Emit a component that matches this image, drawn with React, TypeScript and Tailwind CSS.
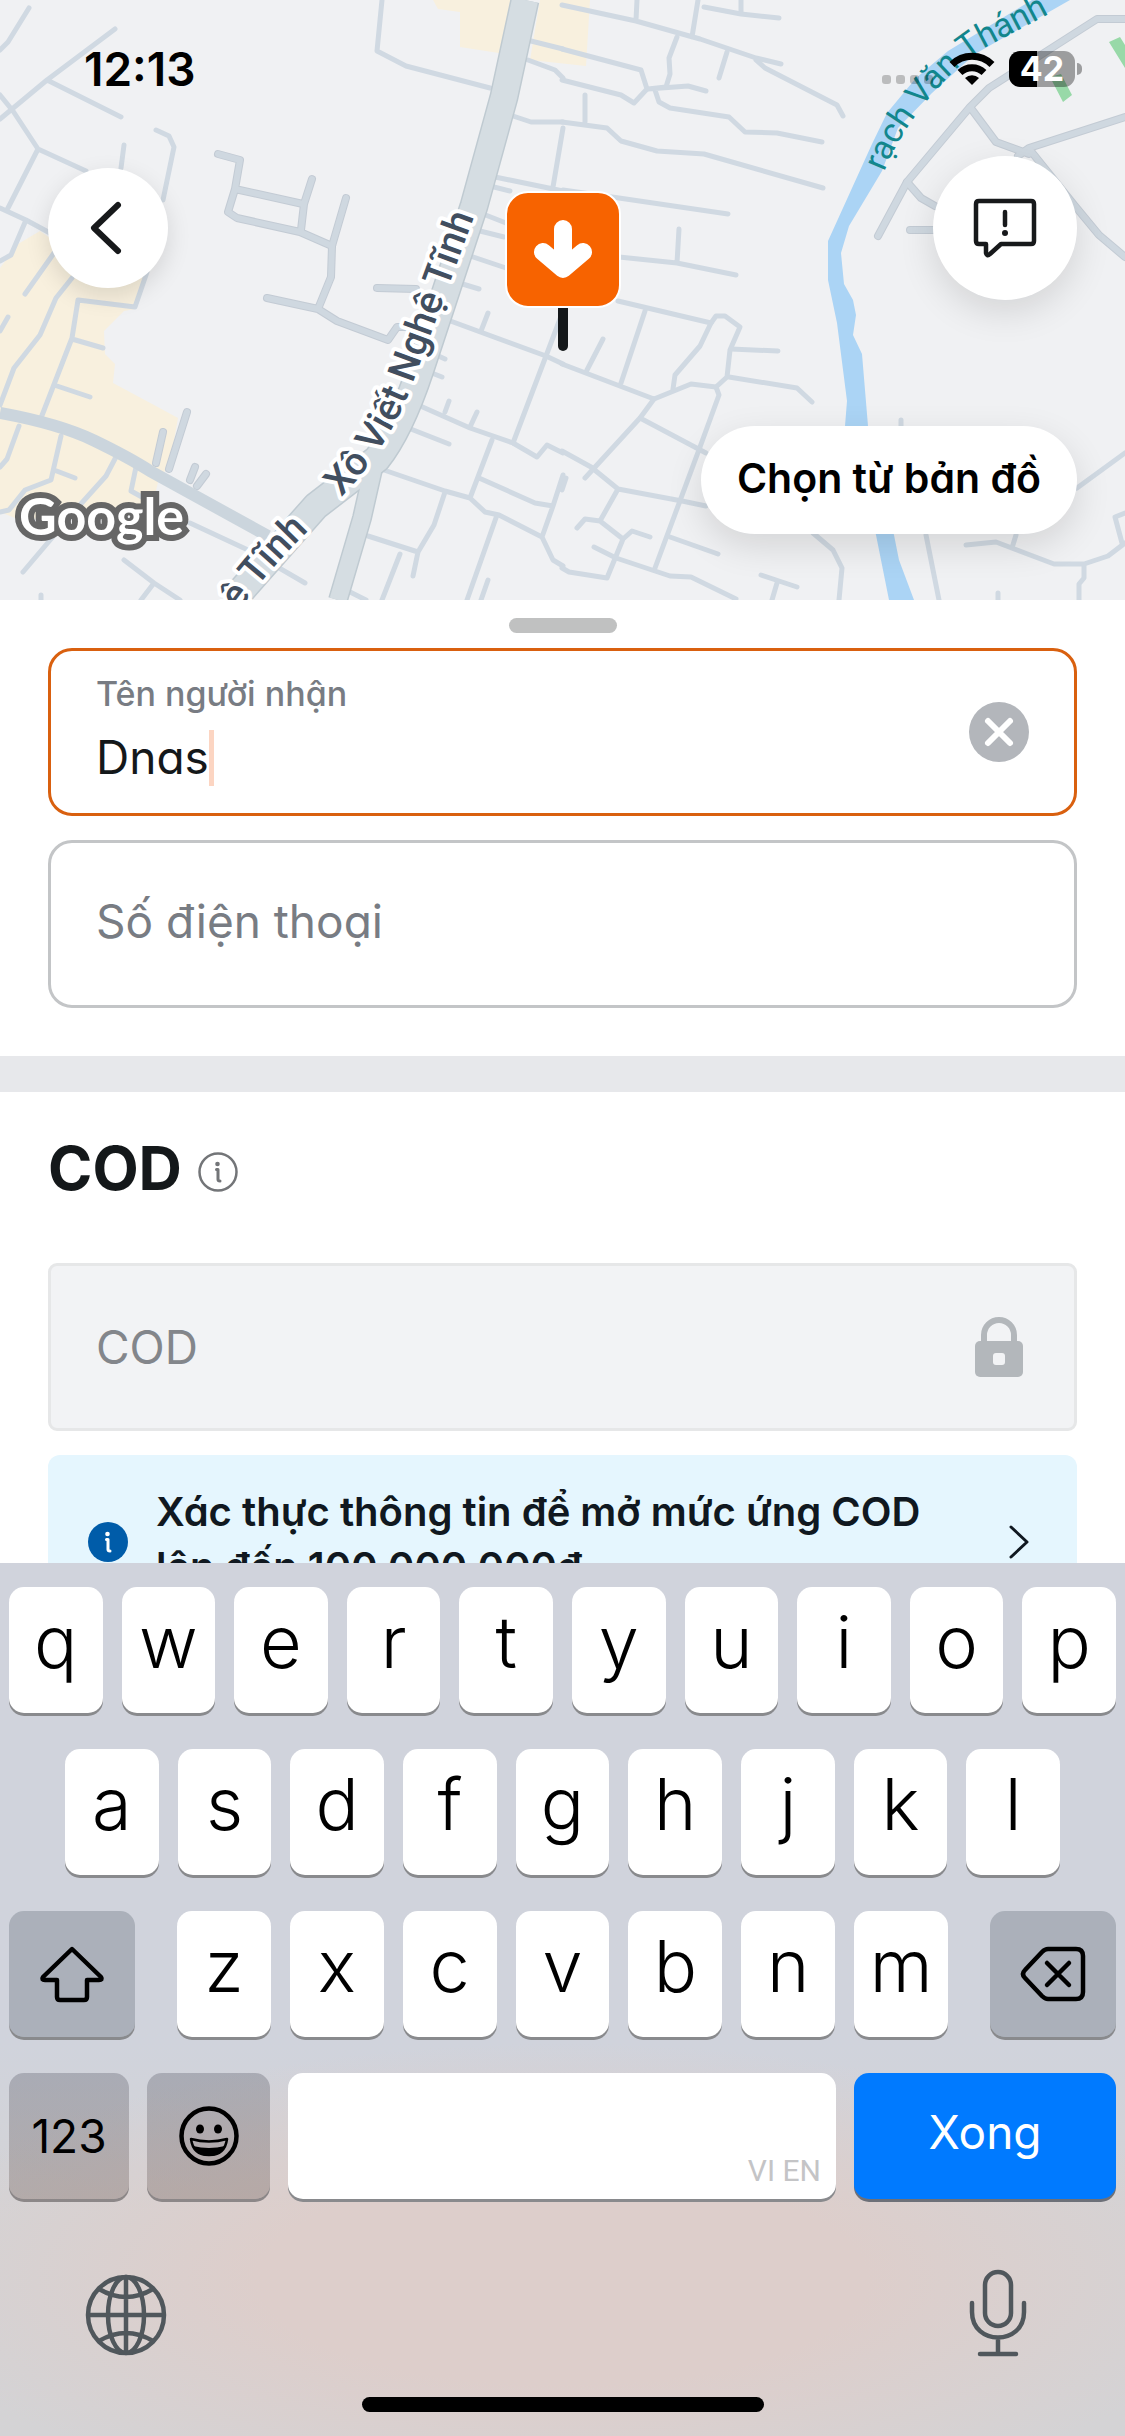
import { useState } from "react";

const ROW_ONE = ["q", "w", "e", "r", "t", "y", "u", "i", "o", "p"];
const ROW_TWO = ["a", "s", "d", "f", "g", "h", "j", "k", "l"];
const ROW_THREE = ["z", "x", "c", "v", "b", "n", "m"];

const LANES = [
  "M0 50L8 42L29 8M0 119L47 80L115 29M47 80L121 117M0 95L13 111L38 149L86 171M38 149L8 208M0 208L26 220L50 233M26 220L11 255L0 261",
  "M124 145L121 168M156 130L169 136L174 147L163 200M147 272L135 307L78 300L72 338L41 418M72 339L103 348M54 385L90 397",
  "M54 253L25 294M72 278L56 298L40 335L14 368L0 405M8 317L0 331M19 426L7 459L0 467M61 436L51 480L25 490L9 510L0 512M54 470L75 478",
  "M117 455L106 476L79 506L23 572M136 467L131 491L151 502M190 523L248 550L305 583M124 560L154 583L180 600M154 583L141 600M41 595V600",
  "M382 0L377 51L406 66L490 88M531 41L563 49M528 60L555 70L563 78M513 116L531 122H563M563 128L553 187M495 177L563 191M494 187L510 191",
  "M483 214L506 223M476 230L504 237M467 255L506 268M456 282L479 289M445 319L546 356L563 364M488 313L481 331M563 311L546 356L513 443",
  "M434 354L445 359M424 370L442 377M409 401L470 428L513 443L537 457L547 445L563 453M449 401L445 412M477 412L470 427M398 424L449 444",
  "M381 469L445 491L470 498L485 512L499 515L542 537L553 560L563 566M492 440L470 498M479 478L535 503L553 506L563 475M553 506L542 537",
  "M445 492L434 525L418 552L413 576M368 536L418 552M400 554L382 600M348 591L366 600M497 515L467 600M488 580L481 600",
  "M562 5L636 21L700 39L756 58L781 64M637 0L636 20M698 0L692 37M704 7L741 14L779 18M741 0V14M562 49L641 70L647 89L634 103L621 95L562 80",
  "M677 37L669 58L670 74L666 87L648 89L688 86L706 91M727 52L719 78M756 60L765 68L837 105L843 116M655 90L659 102L670 108L729 117L745 132L777 133L822 142",
  "M585 95V122M562 122L607 128L621 141L657 151L704 154L823 188M563 190L619 198L728 214M679 229L677 263M619 257L677 263L736 275",
  "M618 301L711 323L716 316L725 316L740 327L730 350L727 377L716 387L691 384L654 399L562 364M603 339L587 370M645 311L621 383",
  "M711 323L700 346L675 375L673 389M731 349L778 351M729 377L797 388L812 402M716 387L719 395L700 447L655 568M654 399L640 418L585 478M640 418L706 453",
  "M562 451L591 467L618 489L682 501L706 506M618 489L600 521M577 528L585 519L600 521L623 539L632 531L650 537M623 539L607 578L569 572L562 568",
  "M594 547L616 558L670 576L691 577L736 599M670 537L718 554M566 478L562 490M761 575L776 580L797 587M777 583L772 600M813 533L833 550L842 568L839 600",
  "M926 535L939 600M966 545L996 542L1054 564H1084L1108 556L1125 543M1016 535L1012 548M1084 564V578L1079 584V600M1077 488L1125 453M1125 513L1115 517L1122 543M901 420V430M998 593V600",
];

const STREETS = [
  "M218 154L240 160L235 189L228 212L237 218L300 232L332 246M235 189L303 204M312 179L304 204L301 230",
  "M346 198L332 246L331 277L318 309L267 298M318 309L337 321L388 340L397 327H406M377 288L416 289",
  "M163 432L156 463M187 412L169 469M195 467L190 480M206 474L197 486",
  "M1125 19H1097L1047 51L989 88L970 107L907 182L878 236M970 107L996 142L1029 154M1125 117L1029 148L1018 156",
  "M1030 150L1075 206L1099 235L1125 257M907 182L921 198L935 206M910 230H934",
];

const MAIN_ROAD = "M525 0L504 97L474 206L420 370Q400 430 377 459L316 506L233 600";
const BRANCH_ROAD = "M374 465L362 518L338 600";

function MapCanvas() {
  return (
    <svg
      viewBox="0 0 1125 600"
      preserveAspectRatio="xMidYMid slice"
      className="block h-full w-full"
      aria-hidden="true"
    >
      <rect width="1125" height="600" fill="#f0f1f3" />
      <path
        d="M40 231L60 245L147 278L135 309L124 311L104 331L105 354L115 364L113 383L154 405L178 418L170 463L158 482L152 508L20 520L0 512V268L18 244Z"
        fill="#f8f0de"
      />
      <path d="M433 0L438 9L460 12V47L499 53L512 0ZM540 0H590L586 66L530 60Z" fill="#f8f0de" />
      <g fill="none" stroke="#d0d9e2" strokeWidth="5" strokeLinecap="round" strokeLinejoin="round">
        {LANES.map((d) => (
          <path key={d} d={d} />
        ))}
      </g>
      <g fill="none" strokeLinecap="round" strokeLinejoin="round">
        {STREETS.map((d) => (
          <path key={d} d={d} stroke="#c3cbd4" strokeWidth="8" />
        ))}
        {STREETS.map((d) => (
          <path key={d} d={d} stroke="#cfd8e0" strokeWidth="6" />
        ))}
      </g>
      <path
        d="M1032 0L948 51L916 78L887 113L872 144L828 241V280L837 323L847 401L845 426L876 535L889 600H914L899 560L894 535L868 426L862 354L853 335L856 315L853 300L844 284L841 253L849 226L882 171L898 128L932 93L975 54L1070 0Z"
        fill="#abd4f5"
      />
      <path d="M1050 77L1061 74L1072 95L1063 102ZM1109 42L1120 37L1125 45V68Z" fill="#98d9a8" />
      <g fill="none" strokeLinejoin="round">
        <path d="M0 413Q60 424 95 441T150 471L268 536" stroke="#cbd5dd" strokeWidth="12" />
        <path d={MAIN_ROAD} stroke="#bfcad1" strokeWidth="29" />
        <path d={BRANCH_ROAD} stroke="#bfcad1" strokeWidth="20" />
        <path d={MAIN_ROAD} stroke="#d5dde2" strokeWidth="26" />
        <path d={BRANCH_ROAD} stroke="#d5dde2" strokeWidth="17" />
      </g>

      <path id="road-label" d="M341 497Q388 450 414 380L484 190" fill="none" />
      <path id="road-label-end" d="M190 700Q222 616 309 530" fill="none" />
      <path id="river-label" d="M884 172C904 122 948 70 984 48L1070 3" fill="none" />
      <g
        fill="#414e5f"
        stroke="#ffffff"
        strokeWidth="8"
        strokeLinejoin="round"
        paintOrder="stroke"
        className="font-['Roboto',sans-serif] text-[39px] font-medium"
      >
        <text>
          <textPath href="#road-label">Xô Viết Nghệ Tĩnh</textPath>
        </text>
        <text textAnchor="end">
          <textPath href="#road-label-end" startOffset="100%">
            hệ Tĩnh
          </textPath>
        </text>
      </g>
      <text fill="#12868c" className="font-['Roboto',sans-serif] text-[34px]">
        <textPath href="#river-label">rạch Văn Thánh</textPath>
      </text>
      <text
        x="19"
        y="535"
        fill="#ffffff"
        stroke="#666666"
        strokeWidth="12"
        paintOrder="stroke"
        className="font-['Lato',sans-serif] text-[52px] font-bold"
      >
        Google
      </text>
    </svg>
  );
}

function StatusBar() {
  return (
    <div className="absolute inset-x-0 top-0 flex h-[138px] items-center justify-between pr-[43px] pl-[84px] text-black">
      <span className="text-[46px] leading-[48px] font-semibold">12:13</span>
      <div className="flex items-center">
        <svg viewBox="0 0 52 10" className="mt-[20px] h-[10px] w-[52px]" fill="#000000" fillOpacity="0.22">
          <rect x="0" y="1" width="9" height="9" rx="3" />
          <rect x="14" y="1" width="9" height="9" rx="3" />
          <rect x="28" y="1" width="9" height="9" rx="3" />
          <rect x="42" y="1" width="9" height="9" rx="3" />
        </svg>
        <svg viewBox="0 0 46 34" className="ml-[15px] h-[34px] w-[46px]" fill="none" stroke="#000000" strokeWidth="7">
          <path d="M3 12.500A28.500 28.500 0 0 1 43 12.500" />
          <path d="M11 20.500A17.500 17.500 0 0 1 35 20.500" />
          <path d="M23 33L16 26A10.500 10.500 0 0 1 30 26Z" fill="#000000" stroke="none" />
        </svg>
        <div className="ml-[14px] flex h-[36px] w-[66px] items-center justify-center rounded-[11px] bg-linear-to-r from-black from-42% to-black/35 to-42%">
          <span className="text-[34px] leading-[36px] font-bold text-white">42</span>
        </div>
        <span className="ml-[2px] h-[12px] w-[5px] rounded-r-full bg-black/35" />
      </div>
    </div>
  );
}

function DropPin() {
  return (
    <svg viewBox="0 0 116 164" className="absolute top-[191px] left-1/2 h-[164px] w-[116px] -translate-x-1/2" aria-hidden="true">
      <path d="M58 116V155" stroke="#14181a" strokeWidth="10" strokeLinecap="round" />
      <rect x="1" y="1" width="114" height="115" rx="22" fill="#f76300" stroke="#ffffff" strokeWidth="2" />
      <path
        d="M58 38V76M38 61L58 78L78 61"
        fill="none"
        stroke="#ffffff"
        strokeWidth="18"
        strokeLinecap="round"
        strokeLinejoin="round"
      />
    </svg>
  );
}

function InfoIcon({ filled = false }: { filled?: boolean }) {
  return (
    <svg viewBox="0 0 40 40" className="h-[40px] w-[40px] shrink-0" fill="none" aria-hidden="true">
      {filled ? (
        <circle cx="20" cy="20" r="20" fill="#005ca9" />
      ) : (
        <circle cx="20" cy="20" r="18.500" stroke="#737578" strokeWidth="2.500" />
      )}
      <g stroke={filled ? "#ffffff" : "#737578"} strokeWidth="3" strokeLinecap="round" strokeLinejoin="round">
        <path d="M18.500 17.500H20V27.500Q20 29 22 29" />
      </g>
      <circle cx="19.500" cy="12" r="2.300" fill={filled ? "#ffffff" : "#737578"} />
    </svg>
  );
}

function LetterKey({ label }: { label: string }) {
  return (
    <button
      type="button"
      className="h-[126px] min-w-0 flex-1 rounded-[15px] bg-white pb-[16px] text-[72px] leading-[110px] font-light text-black shadow-[0_3px_0_#898a8d]"
    >
      {label}
    </button>
  );
}

function Keyboard() {
  return (
    <div className="flex shrink-0 flex-col gap-[36px] bg-[#d0d3dc] bg-[radial-gradient(ellipse_60%_27%_at_50%_82%,#ddcecb_0%,#ddcecb_45%,transparent_100%),linear-gradient(#d0d3dc_55%,#d4d3d5_75%)] px-[9px] pt-[24px] pb-[24px]">
      <div className="flex gap-[19px]">
        {ROW_ONE.map((key) => (
          <LetterKey key={key} label={key} />
        ))}
      </div>
      <div className="flex gap-[19px] px-[56px]">
        {ROW_TWO.map((key) => (
          <LetterKey key={key} label={key} />
        ))}
      </div>
      <div className="flex gap-[42px]">
        <button
          type="button"
          aria-label="Shift"
          className="flex h-[126px] w-[126px] items-center justify-center rounded-[15px] bg-[#727c8866] shadow-[0_3px_0_#898a8d]"
        >
          <svg viewBox="0 0 66 58" className="h-[58px] w-[66px]" fill="none" stroke="#000000" strokeWidth="4.500" strokeLinejoin="round">
            <path d="M33 4L62 32Q64 35 60 35H48V52Q48 55 45 55H21Q18 55 18 52V35H6Q2 35 4 32Z" />
          </svg>
        </button>
        <div className="flex flex-1 gap-[19px]">
          {ROW_THREE.map((key) => (
            <LetterKey key={key} label={key} />
          ))}
        </div>
        <button
          type="button"
          aria-label="Delete"
          className="flex h-[126px] w-[126px] items-center justify-center rounded-[15px] bg-[#727c8866] shadow-[0_3px_0_#898a8d]"
        >
          <svg
            viewBox="0 0 66 58"
            className="h-[58px] w-[66px]"
            fill="none"
            stroke="#000000"
            strokeWidth="4.500"
            strokeLinecap="round"
            strokeLinejoin="round"
          >
            <path d="M28 4H56Q63 4 63 11V47Q63 54 56 54H28Q25 54 22 51L5 33Q1 29 5 25L22 7Q25 4 28 4Z" />
            <path d="M27 18L49 40M49 18L27 40" />
          </svg>
        </button>
      </div>
      <div className="flex gap-[18px]">
        <button
          type="button"
          className="h-[126px] w-[120px] rounded-[15px] bg-linear-to-b from-[#6e707c66] to-[#80706b66] text-[46px] text-black shadow-[0_3px_0_#8c8788]"
        >
          123
        </button>
        <button
          type="button"
          aria-label="Emoji"
          className="flex h-[126px] w-[123px] items-center justify-center rounded-[15px] bg-linear-to-b from-[#6e707c66] to-[#80706b66] shadow-[0_3px_0_#8c8788]"
        >
          <svg viewBox="0 0 60 60" className="h-[60px] w-[60px]">
            <circle cx="30" cy="30" r="27.500" fill="none" stroke="#000000" strokeWidth="4.500" />
            <ellipse cx="21" cy="23" rx="4" ry="4.500" />
            <ellipse cx="39" cy="23" rx="4" ry="4.500" />
            <path
              d="M12 33Q30 38 48 33Q46 49 30 49Q14 49 12 33Z"
              fill="none"
              stroke="#000000"
              strokeWidth="2.500"
              strokeLinejoin="round"
            />
            <path d="M14 40Q30 44 46 40Q42 50 30 50Q18 50 14 40Z" />
          </svg>
        </button>
        <button
          type="button"
          aria-label="Space"
          className="flex h-[126px] flex-1 items-end justify-end rounded-[15px] bg-white pr-[15px] pb-[10px] font-['Roboto',sans-serif] text-[30px] leading-[36px] text-[#c4c4c6] shadow-[0_3px_0_#898a8d]"
        >
          VI EN
        </button>
        <button
          type="button"
          className="h-[126px] w-[262px] rounded-[15px] bg-[#007aff] pb-[8px] text-[46px] text-white shadow-[0_3px_0_#6d7078]"
        >
          Xong
        </button>
      </div>
      <div className="flex items-center justify-between pt-[34px] pr-[88px] pl-[76px]">
        <button type="button" aria-label="Next keyboard">
          <svg viewBox="0 0 82 88" className="h-[88px] w-[82px]" fill="none" stroke="#50575c" strokeWidth="4.500">
            <circle cx="41" cy="46" r="38" />
            <ellipse cx="41" cy="46" rx="18" ry="38" />
            <path d="M41 8V84M3 46H79M14 20Q41 36 68 20M14 72Q41 56 68 72" />
          </svg>
        </button>
        <button type="button" aria-label="Dictate">
          <svg
            viewBox="0 0 60 88"
            className="h-[88px] w-[60px]"
            fill="none"
            stroke="#50575c"
            strokeWidth="4.500"
            strokeLinecap="round"
          >
            <rect x="17" y="3" width="26" height="54" rx="13" />
            <path d="M4 34V43C4 77 56 77 56 43V34M30 69V85M12 85H48" />
          </svg>
        </button>
      </div>
      <div className="mt-[4px] flex justify-center">
        <span className="h-[15px] w-[402px] rounded-full bg-black" />
      </div>
    </div>
  );
}

export default function App() {
  const [name, setName] = useState("Dnas");
  const [phone, setPhone] = useState("");

  return (
    <div className="flex h-screen flex-col overflow-hidden bg-white font-['Inter','Noto_Sans',sans-serif]">
      {/* Map */}
      <header className="relative h-[600px] shrink-0 overflow-hidden">
        <MapCanvas />
        <StatusBar />
        <DropPin />
        <button
          type="button"
          aria-label="Quay lại"
          className="absolute top-[168px] left-[48px] flex h-[120px] w-[120px] items-center justify-center rounded-full bg-white shadow-[0_8px_24px_rgba(0,0,0,0.12)]"
        >
          <svg viewBox="0 0 40 60" className="mr-[8px] h-[60px] w-[40px]" fill="none" stroke="#17191b" strokeWidth="6" strokeLinecap="round" strokeLinejoin="round">
            <path d="M34 7L10 30L34 53" />
          </svg>
        </button>
        <button
          type="button"
          aria-label="Báo lỗi"
          className="absolute top-[156px] right-[48px] flex h-[144px] w-[144px] items-center justify-center rounded-full bg-white shadow-[0_12px_36px_rgba(0,0,0,0.12)]"
        >
          <svg viewBox="0 0 66 62" className="h-[62px] w-[66px]" fill="none" stroke="#17191b" strokeWidth="4.500" strokeLinecap="round" strokeLinejoin="round">
            <path d="M7 4H59Q62 4 62 7V44Q62 47 59 47H29L18 57Q15 60 14 56V47H7Q4 47 4 44V7Q4 4 7 4Z" />
            <path d="M33 15V28" />
            <circle cx="33" cy="36" r="3" fill="#17191b" stroke="none" />
          </svg>
        </button>
        <button
          type="button"
          className="absolute right-[48px] bottom-[66px] h-[108px] rounded-full bg-white px-[36px] pb-[5px] text-[41px] leading-[48px] font-semibold text-black shadow-[0_12px_36px_rgba(0,0,0,0.12)] [font-feature-settings:'cv11']"
        >
          Chọn từ bản đồ
        </button>
      </header>

      {/* Receiver form */}
      <main className="min-h-0 flex-1 overflow-hidden [font-feature-settings:'cv11']">
        <div className="flex justify-center pt-[18px]">
          <span className="h-[15px] w-[108px] rounded-full bg-[#c0c1c1]" />
        </div>
        <div className="flex flex-col gap-[24px] px-[48px] pt-[15px] pb-[48px]">
          <div className="flex h-[168px] items-center justify-between rounded-[24px] border-3 border-[#d9600f] px-[45px]">
            <div className="pb-[4px]">
              <label htmlFor="receiver" className="block text-[34px] leading-[40px] font-medium text-[#787c83]">
                Tên người nhận
              </label>
              <div className="mt-[16px] flex items-center">
                <input
                  id="receiver"
                  value={name}
                  onChange={(e) => setName(e.target.value)}
                  className="field-sizing-content pb-[2px] text-[46px] leading-[54px] text-[#14181a] caret-transparent outline-none"
                />
                <span className="h-[56px] w-[5px] bg-[#fcd5c2]" />
              </div>
            </div>
            <button type="button" aria-label="Xóa" onClick={() => setName("")}>
              <svg viewBox="0 0 60 60" className="h-[60px] w-[60px]">
                <circle cx="30" cy="30" r="30" fill="#b3b6bb" />
                <path d="M19 19L41 41M41 19L19 41" stroke="#ffffff" strokeWidth="6" strokeLinecap="round" />
              </svg>
            </button>
          </div>
          <div className="flex h-[168px] items-center rounded-[24px] border-3 border-[#c3c5c7] px-[45px]">
            <input
              type="tel"
              aria-label="Số điện thoại"
              placeholder="Số điện thoại"
              value={phone}
              onChange={(e) => setPhone(e.target.value)}
              className="w-full pb-[6px] text-[46px] leading-[60px] text-[#14181a] outline-none placeholder:text-[#787c83]"
            />
          </div>
        </div>

        <div className="h-[36px] bg-[#e7e8eb]" />

        {/* COD */}
        <section className="px-[48px] pt-[40px]">
          <div className="flex items-center gap-[16px]">
            <h2 className="text-[60px] leading-[72px] font-bold text-[#14181a]">COD</h2>
            <button type="button" aria-label="Thông tin COD" className="mt-[8px]">
              <InfoIcon />
            </button>
          </div>
          <div className="mt-[59px] flex h-[168px] items-center justify-between rounded-[9px] border-3 border-[#e6e7e8] bg-[#f2f3f5] px-[45px]">
            <input
              aria-label="COD"
              placeholder="COD"
              disabled
              className="min-w-0 flex-1 text-[46px] leading-[60px] placeholder:text-[#83868b]"
            />
            <svg viewBox="0 0 60 60" className="h-[60px] w-[60px]" aria-hidden="true">
              <path d="M15 28V18A15 15 0 0 1 45 18V28" fill="none" stroke="#b3b7bb" strokeWidth="6" />
              <rect x="6" y="24" width="48" height="36" rx="5" fill="#b3b7bb" />
              <rect x="24" y="36" width="12" height="12" rx="3" fill="#f2f3f5" />
            </svg>
          </div>
          <a
            href="#verify"
            className="mt-[24px] flex items-center rounded-[12px] bg-[#e5f6fe] py-[29px] pr-[46px] pl-[40px]"
          >
            <InfoIcon filled />
            <span className="ml-[28px] w-[800px] pb-[6px] text-[40px] leading-[55px] font-semibold text-[#101820]">
              Xác thực thông tin để mở mức ứng COD lên đến 100.000.000đ
            </span>
            <svg
              viewBox="0 0 24 36"
              className="ml-auto h-[36px] w-[24px]"
              fill="none"
              stroke="#101820"
              strokeWidth="3"
              strokeLinecap="round"
              strokeLinejoin="round"
            >
              <path d="M4 3L20 18L4 33" />
            </svg>
          </a>
        </section>
      </main>

      <Keyboard />
    </div>
  );
}
